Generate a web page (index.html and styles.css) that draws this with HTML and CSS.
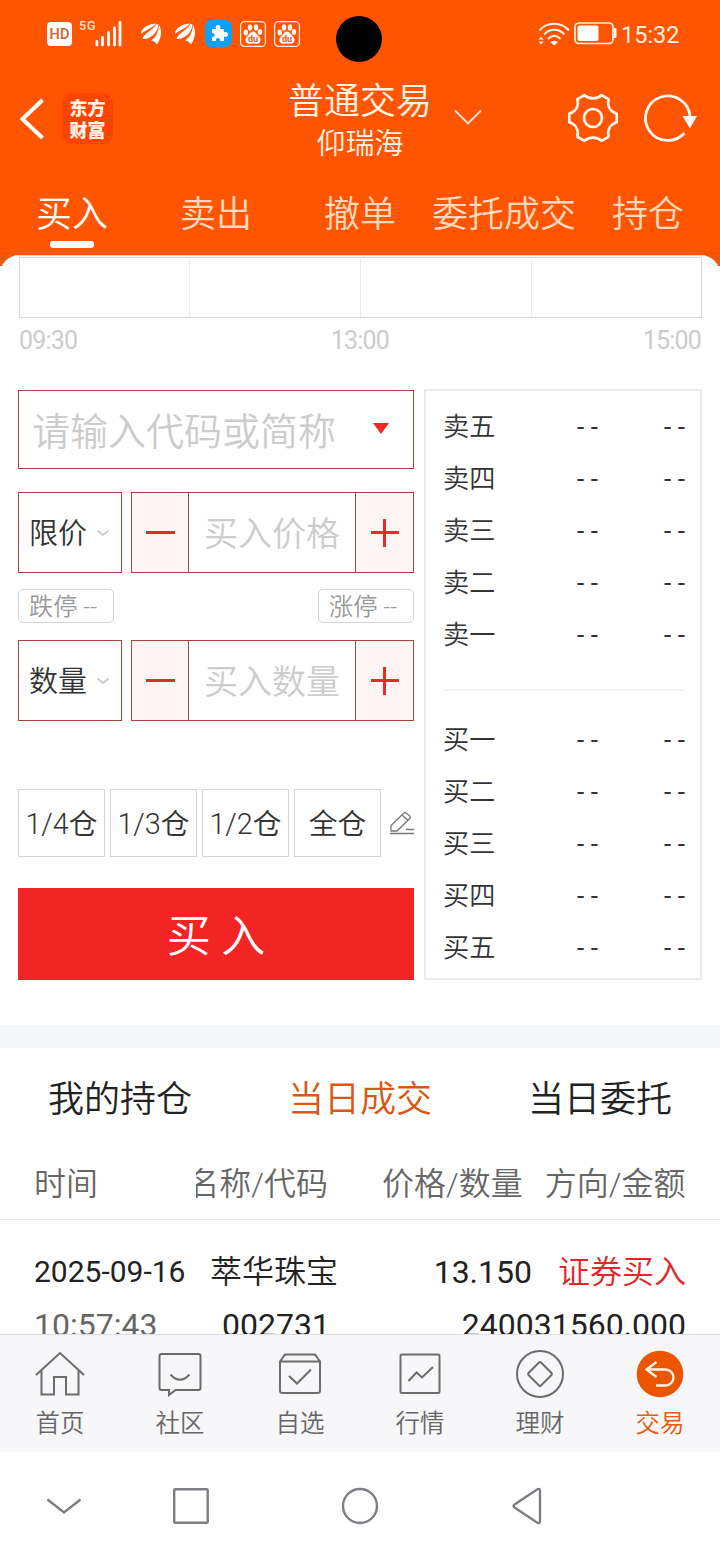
FILE: index.html
```html
<!DOCTYPE html>
<html lang="zh-CN">
<head>
<meta charset="utf-8">
<title>普通交易</title>
<link rel="stylesheet" href="styles.css">
</head>
<body>
<svg class="defs" aria-hidden="true">
  <symbol id="wing" viewBox="0 0 20 24">
    <path d="M0 12C0 6 7 2 15 1.500C12 6 6 7 0 12Z"/>
    <path d="M1.500 17C3 11 11 9 15.500 2L17.500 2.500C17 9 12 15 5 17Q3 17 1.500 17Z"/>
    <path d="M10 18.500C15.500 15 17.500 9 18 3C21 8 21 15 16 22.500Q14 19 10 18.500Z"/>
  </symbol>
  <symbol id="paw" viewBox="0 0 26 26">
    <rect x=".6" y=".6" width="24.800" height="24.800" rx="4" fill="none" stroke="#fff0e2" stroke-width="1.200"/>
    <ellipse cx="5.800" cy="11.500" rx="2.200" ry="3"/><ellipse cx="10" cy="6.500" rx="2.200" ry="3.200"/>
    <ellipse cx="16" cy="6.500" rx="2.200" ry="3.200"/><ellipse cx="20" cy="11" rx="2.200" ry="3"/>
    <path d="M13 10.500C16 10.500 17 14 19 15.500C22 18.500 20.500 23 16.500 22.800C14 22.500 12 22.500 9.500 22.800C5.500 23 4 18.500 7 15.500C9 14 10 10.500 13 10.500Z"/>
    <text x="13" y="21" text-anchor="middle" class="paw-text">du</text>
  </symbol>
  <symbol id="chev" viewBox="0 0 14 8"><path d="M1.500 1.500L7 6L12.500 1.500" fill="none" stroke="#ccc" stroke-width="1.800"/></symbol>
</svg>
<header class="header">
  <div class="status">
    <span class="hd">HD</span>
    <span class="fiveg">5G</span>
    <svg class="signal" width="27" height="28" viewBox="0 0 27 28" stroke="#fff" stroke-width="2.800" stroke-linecap="round"><path d="M1.900 21.500V25M7.500 17.500V25M13.500 12.500V25M19.500 8V25M25 2.500V25"/></svg>
    <svg class="wing" width="20" height="24"><use href="#wing"/></svg>
    <svg class="wing wing-2" width="20" height="24"><use href="#wing"/></svg>
    <svg class="puzzle" width="27" height="27" viewBox="0 0 27 27"><rect width="27" height="27" rx="6.500" fill="#0aa2fb"/><path fill="#fff" d="M7 9H11C10 7 11 5 13 5S16 7 15 9H19V12.500C21 11.500 23 12.500 23 14.500S21 17.500 19 16.500V21H15C15.500 19 14.500 18 13 18S10.500 19 11 21H7V17C9 17 9.700 16 9.700 15S9 13 7 13Z"/></svg>
    <svg class="paw" width="26" height="26"><use href="#paw"/></svg>
    <svg class="paw paw-2" width="26" height="26"><use href="#paw"/></svg>
    <span class="camera"></span>
    <svg class="wifi" width="32" height="24" viewBox="0 0 32 24" fill="none" stroke="#fff0e2" stroke-width="2"><path d="M1.500 8.500C9-.5 23-.5 31 8.500M6 12.500C11.500 6 21 6 26.500 12.500M10 17C14 12.500 18.500 12.500 22.500 17"/><path d="M12.500 20L16.300 18.500L20 20L16.300 23.500ZM.5 17.500L3 14.500L5.500 17.500ZM.5 19.500L3 22.500L5.500 19.500Z" fill="#fff" stroke="none"/></svg>
    <svg class="battery" width="43" height="23" viewBox="0 0 43 23"><rect x="1" y="1" width="38" height="20.500" rx="4" fill="none" stroke="#fff0e2" stroke-width="1.700"/><rect x="3.500" y="3.500" width="21" height="15.500" rx="2" fill="#fff"/><path d="M40 6H41Q42.500 6 42.500 7.500V14.500Q42.500 16 41 16H40Z" fill="#fff"/></svg>
    <span class="clock">15:32</span>
  </div>
  <div class="titlebar">
    <svg class="back" width="26" height="42" viewBox="0 0 26 42"><path d="M24.500 2L4.500 21L24.500 40" fill="none" stroke="#fff" stroke-width="4"/></svg>
    <div class="logo"><span>东方</span><span>财富</span></div>
    <div class="title"><div class="title-main">普通交易</div><div class="title-sub">仰瑞海</div></div>
    <svg class="down" width="28" height="17" viewBox="0 0 28 17"><path d="M1 1.500L14 14.500L27 1.500" fill="none" stroke="#ffeadb" stroke-width="1.800"/></svg>
    <svg class="gear" width="52" height="50" viewBox="0 0 52 50" fill="none" stroke="#fff8f0" stroke-width="2.700"><circle cx="26" cy="25" r="9"/><path d="M17.500 2.200C22 6.500 30 6.500 34.500 2.200L41.500 6.200C40 13 43 18.500 49.700 20.800V29.200C43 31.500 40 37 41.500 43.800L34.500 47.800C30 43.500 22 43.500 17.500 47.800L10.500 43.800C12 37 9 31.500 2.300 29.200V20.800C9 18.500 12 13 10.500 6.200Z" stroke-linejoin="round"/></svg>
    <svg class="refresh" width="53" height="48" viewBox="0 0 53 48"><path d="M46 22A22.300 22.300 0 1 0 40.500 39" fill="none" stroke="#fff8f0" stroke-width="2.800"/><path d="M38.500 22H53L46 34.500Z" fill="#fff"/></svg>
  </div>
  <nav class="tabs">
    <span class="tab tab-on">买入</span><span class="tab">卖出</span><span class="tab">撤单</span><span class="tab">委托成交</span><span class="tab">持仓</span>
  </nav>
</header>
<div class="shade">
<main class="main">
  <div class="chart"><i></i><i></i><i></i><i></i></div>
  <div class="times"><span>09:30</span><span>13:00</span><span>15:00</span></div>
  <div class="trade">
    <section class="form">
      <div class="search"><span>请输入代码或简称</span><i class="tri"></i></div>
      <div class="row">
        <div class="select"><span>限价</span><svg width="14" height="8"><use href="#chev"/></svg></div>
        <div class="stepper"><b class="minus"></b><span>买入价格</span><b class="plus"></b></div>
      </div>
      <div class="limits"><span>跌停 --</span><span>涨停 --</span></div>
      <div class="row">
        <div class="select"><span>数量</span><svg width="14" height="8"><use href="#chev"/></svg></div>
        <div class="stepper"><b class="minus"></b><span>买入数量</span><b class="plus"></b></div>
      </div>
      <div class="quick">
        <span>1/4仓</span><span>1/3仓</span><span>1/2仓</span><span>全仓</span>
        <svg width="24" height="24" viewBox="0 0 24 24" fill="none" stroke="#777" stroke-width="1.300"><path d="M1 20V14.500L14 2Q15 1 16 2L20 5.200Q21 6.200 20 7.200L7 20ZM12 4L18 9.300M16 18.500H24M0 22.500H24"/></svg>
      </div>
      <div class="buy">买 入</div>
    </section>
    <section class="book">
      <div><span>卖五</span><em>- -</em><em>- -</em></div>
      <div><span>卖四</span><em>- -</em><em>- -</em></div>
      <div><span>卖三</span><em>- -</em><em>- -</em></div>
      <div><span>卖二</span><em>- -</em><em>- -</em></div>
      <div><span>卖一</span><em>- -</em><em>- -</em></div>
      <hr>
      <div><span>买一</span><em>- -</em><em>- -</em></div>
      <div><span>买二</span><em>- -</em><em>- -</em></div>
      <div><span>买三</span><em>- -</em><em>- -</em></div>
      <div><span>买四</span><em>- -</em><em>- -</em></div>
      <div><span>买五</span><em>- -</em><em>- -</em></div>
    </section>
  </div>
  <div class="band"></div>
  <div class="subtabs"><span>我的持仓</span><span class="sub-on">当日成交</span><span>当日委托</span></div>
  <div class="cols head"><span>时间</span><span class="clip">名称/代码</span><span>价格/数量</span><span>方向/金额</span></div>
  <div class="cols line1"><span class="date">2025-09-16</span><span class="name">萃华珠宝</span><span class="price">13.150</span><span class="side">证券买入</span></div>
  <div class="cols line2"><span class="time">10:57:43</span><span class="code">002731</span><span class="qty">2400</span><span>31560.000</span></div>
</main>
</div>
<nav class="bottom">
  <div><svg width="50" height="50" viewBox="0 0 50 50"><path d="M1 25L25 3L49 25M6.500 20.500V44.500H19V27H31V44.500H43.500V20.500"/></svg><span>首页</span></div>
  <div><svg width="50" height="50" viewBox="0 0 50 50"><path d="M6.500 4H43.500Q45.500 4 45.500 6V38Q45.500 40 43.500 40H20.500L14 45V40H6.500Q4.500 40 4.500 38V6Q4.500 4 6.500 4ZM15.500 24.500Q25 35 34.500 24.500"/></svg><span>社区</span></div>
  <div><svg width="50" height="50" viewBox="0 0 50 50"><path d="M5 11.500H45V40.500Q45 43 42.500 43H7.500Q5 43 5 40.500V11.500L10 4.500H40L45 11.500M14 26L22 33.500L36 19.500"/></svg><span>自选</span></div>
  <div><svg width="50" height="50" viewBox="0 0 50 50"><rect x="5.500" y="4.500" width="39" height="38.500" rx="1.500"/><path d="M13.500 31L21.500 22.500L27 27.500L38 17"/></svg><span>行情</span></div>
  <div><svg width="50" height="50" viewBox="0 0 50 50"><circle cx="25" cy="24" r="23"/><path d="M24 12.500Q25 11.500 26 12.500L36.500 23Q37.500 24 36.500 25L26 35.500Q25 36.500 24 35.500L13.500 25Q12.500 24 13.500 23Z"/></svg><span>理财</span></div>
  <div class="bot-on"><svg width="50" height="50" viewBox="0 0 50 50"><circle cx="25" cy="24" r="23.300" class="disc"/><path class="arrow" d="M21.500 12L11.500 19.500L21.500 27M11.500 19.500H30.500A8 8 0 0 1 30.500 35.500H21"/></svg><span>交易</span></div>
</nav>
<footer class="sys">
  <svg width="36" height="18" viewBox="0 0 36 18"><path d="M1.500 2.500L18 15.500L34.500 2.500"/></svg>
  <svg class="sq" width="36" height="36" viewBox="0 0 36 36"><rect x="1.200" y="1.200" width="33.500" height="33.500" rx="1"/></svg>
  <svg class="ci" width="38" height="38" viewBox="0 0 38 38"><circle cx="19" cy="19" r="17"/></svg>
  <svg class="bk" width="30" height="38" viewBox="0 0 30 38"><path d="M2.500 17.500L25 2.500Q28 1 28 4V34Q28 37 25 35.500L2.500 20.500Q.5 19 2.500 17.500Z"/></svg>
</footer>
</body>
</html>
```
FILE: styles.css
```css
* { box-sizing: border-box; }
body { margin: 0; width: 720px; height: 1560px; overflow: hidden; background: #fff; color: #222; font-family: Roboto, "Noto Sans CJK SC", sans-serif; display: flex; flex-direction: column; white-space: nowrap; }
svg { display: block; flex: none; }
i, em { font-style: normal; }
.defs { position: absolute; width: 0; height: 0; }

.header { height: 255px; background: #ff5500; color: #fff; flex: none; }
.status { height: 70px; display: flex; align-items: flex-start; padding-left: 47px; }
.hd { width: 25px; height: 24px; margin-top: 22px; border-radius: 4px; background: #fff; color: #d9601f; font: 500 14.500px/25px Roboto, sans-serif; text-align: center; }
.fiveg { width: 20px; margin: 19px 0 0 7px; color: #ffe3d0; font: 500 12.500px/14px Roboto, sans-serif; letter-spacing: .8px; }
.signal { margin: 20px 0 0 -4px; }
.wing { margin: 22px 0 0 19px; fill: #fff; }
.wing-2 { margin-left: 14px; }
.puzzle { margin: 20px 0 0 10px; }
.paw { margin: 21px 0 0 8px; fill: #fff8f0; }
.paw-2 { margin-left: 8px; }
.paw-text { font: 700 9px Roboto, sans-serif; fill: #d9601f; }
.camera { width: 46px; height: 46px; border-radius: 50%; background: #000; margin: 16px 0 0 36px; }
.wifi { margin: 22px 0 0 156px; }
.battery { margin: 22px 0 0 4px; }
.clock { margin: 20px 0 0 4px; font-size: 23.500px; line-height: 30px; color: #fff0e2; }

.titlebar { height: 100px; display: flex; align-items: flex-start; padding-left: 18px; }
.back { margin-top: 28px; }
.logo { width: 51px; height: 51px; margin: 23px 0 0 18px; border-radius: 11px; background: #ff4400; display: flex; flex-direction: column; align-items: center; padding-top: 3px; font: 900 18px/22px "Noto Sans CJK SC", sans-serif; color: #fff4ec; }
.title { width: 144px; margin-left: 175px; text-align: center; color: #fff3e4; }
.title-main { font-size: 36px; line-height: 42px; padding-top: 11px; font-weight: 350; }
.title-sub { font-size: 29px; line-height: 36px; padding-top: 3px; font-weight: 350; }
.down { margin: 39px 0 0 22px; }
.gear { margin: 23px 0 0 85px; }
.refresh { margin: 24px 0 0 25px; }
.tabs { height: 85px; display: grid; grid-template-columns: repeat(5, 144px); }
.tab { display: flex; flex-direction: column; align-items: center; padding-top: 22px; font-size: 36px; line-height: 46px; font-weight: 350; color: #ffd9bf; }
.tab-on { color: #fff; }
.tab-on::after { content: ""; width: 44px; height: 7px; border-radius: 3px; background: #fff; margin-top: 3px; }

.shade { height: 1079px; flex: none; background: linear-gradient(#e65a0d 11px, #fff 11px); }
.main { height: 1079px; overflow: hidden; background: #fff; border-radius: 19px 19px 0 0; border-top: 1px solid #e8dcd2; }
.chart { margin: 1px 18px 0 19px; height: 61px; border: 1px solid #d5d9dc; display: grid; grid-template-columns: 169px 171px 171px 1fr; }
.chart i + i { border-left: 1px solid #ebebeb; }
.times { display: flex; justify-content: space-between; margin: 0 19px 0 19px; padding-top: 9px; height: 71px; font-size: 25px; line-height: 28px; color: #ccc; letter-spacing: -.8px; }
.trade { display: flex; gap: 10px; height: 636px; padding: 0 18px; }
.form { width: 396px; padding-top: 1px; color: #333; }
.search { height: 79px; border: 1px solid #a94442; display: flex; align-items: center; justify-content: space-between; padding: 0 24px 2px 13px; font-size: 38px; font-weight: 350; color: #ccc; }
.tri { border: 8px solid transparent; border-top: 11px solid #f32424; border-bottom: 0; }
.row { height: 81px; display: flex; gap: 9px; margin-top: 23px; }
.select { width: 104px; border: 1px solid #a94442; display: flex; align-items: center; justify-content: space-between; padding: 0 11px 0 10px; font-size: 29px; }
.select span { padding-bottom: 3px; font-weight: 350; }
.stepper { width: 283px; border: 1px solid #a94442; display: flex; }
.stepper span { flex: 1; border: solid #a94442; border-width: 0 1px; font-size: 34px; line-height: 83px; height: 79px; text-align: center; font-weight: 350; color: #ccc; }
.minus, .plus { flex: none; width: 56px; background: linear-gradient(#dd2d2b, #dd2d2b) center / 29px 3px no-repeat #fff5f4; }
.plus { width: 57px; background: linear-gradient(#ed2828, #ed2828) center / 28px 3px no-repeat, linear-gradient(#ed2828, #ed2828) center / 3px 28px no-repeat #fff5f4; }
.limits { display: flex; justify-content: space-between; margin: 16px 0 -6px; }
.limits span { width: 96px; height: 34px; border: 1px solid #d5d5d5; border-radius: 5px; padding-left: 10px; font-size: 24.200px; line-height: 35px; font-weight: 350; color: #999; }
.quick { display: flex; gap: 5px; margin-top: 68px; align-items: center; }
.quick span { flex: none; width: 87px; height: 68px; border: 1px solid #d5d5d5; font-size: 28.800px; line-height: 68px; text-align: center; font-weight: 350; }
.quick svg { margin-left: 4px; }
.buy { height: 92px; margin-top: 31px; background: #f32424; color: #fff; font-size: 44px; line-height: 99px; text-align: center; font-weight: 350; }
.book { width: 278px; height: 591px; border: 2px solid #ebebed; padding: 10px 15px 0 17px; font-size: 26.200px; color: #333; }
.book div { display: grid; grid-template-columns: 1fr 87px 87px; height: 52px; line-height: 52px; text-align: right; }
.book div span { text-align: left; font-weight: 350; }
.book hr { border: 0; height: 2px; background: #f4f4f5; margin: 28px 0 23px; }
.band { height: 23px; background: #f6f7f9; }
.subtabs { display: grid; grid-template-columns: repeat(3, 240px); text-align: center; height: 100px; font-size: 36px; line-height: 104px; font-weight: 350; }
.sub-on { color: #dc5810; }
.cols { display: flex; padding-left: 34px; }
.head { height: 72px; border-bottom: 1px solid #eaeaea; font-size: 32px; line-height: 73px; font-weight: 350; color: #666; }
.clip { width: 132px; margin-left: 98px; overflow: hidden; display: flex; justify-content: flex-end; }
.clip + span { margin: 0 22px 0 54px; }
.line1 { height: 76px; padding-top: 26px; font-size: 32px; line-height: 52px; }
.date { width: 176px; font-size: 30px; }
.name { width: 128px; font-weight: 350; }
.price { width: 194px; text-align: right; }
.side { margin-left: 26px; color: #e02828; font-weight: 350; }
.line2 { padding-right: 34px; font-size: 32px; line-height: 58px; }
.time { width: 188px; color: #666; }
.code { width: 107px; }
.qty { margin-left: auto; }

.bottom { height: 118px; flex: none; background: #f7f7f9; border-top: 1px solid #dedee0; display: grid; grid-template-columns: repeat(6, 120px); color: #666; font-size: 24.500px; font-weight: 350; }
.bottom div { display: flex; flex-direction: column; align-items: center; padding-top: 15px; }
.bottom svg, .sys svg { fill: none; stroke: #6c6c6c; stroke-width: 2; }
.bottom span { line-height: 36px; margin-top: 6px; }
.bottom .bot-on { color: #e85a0c; }
.bot-on .disc { fill: #ec5500; stroke: none; }
.bot-on .arrow { stroke: #fff4e8; stroke-width: 2.300; }
.sys { height: 108px; display: flex; align-items: center; padding-left: 46px; }
.sys svg { stroke: #7b7e82; stroke-width: 2.400; }
.sys .sq { margin-left: 91px; }
.sys .ci { margin-left: 132px; }
.sys .bk { margin-left: 133px; }
```
